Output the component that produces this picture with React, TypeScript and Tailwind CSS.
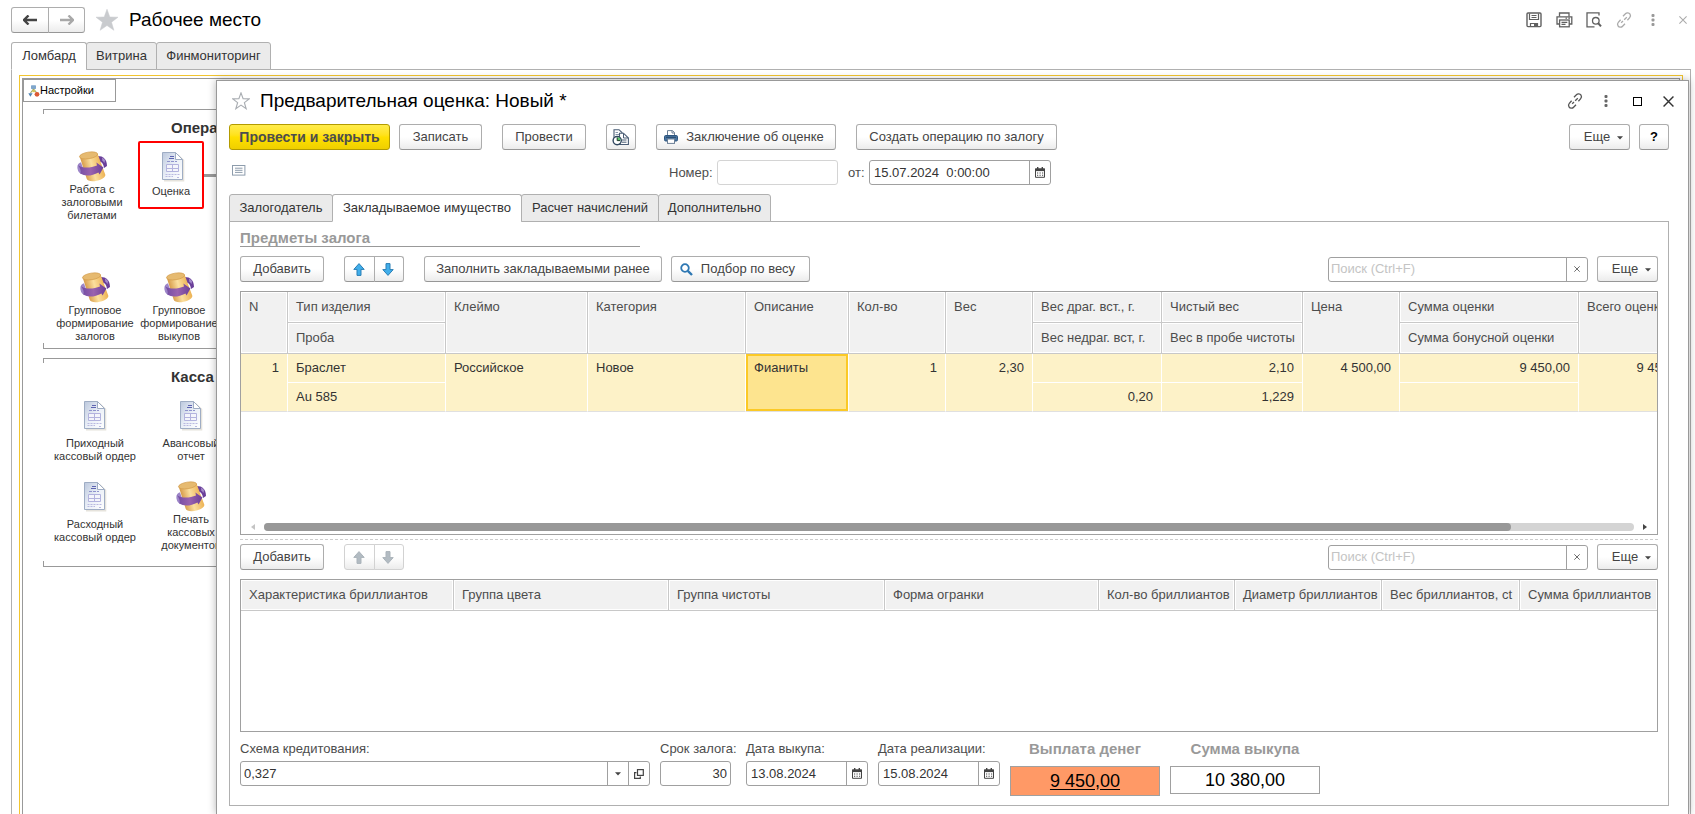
import type { ReactNode } from 'react'
import clsx from 'clsx'

const TOP_TABS = [
  { title: 'Ломбард', width: 'w-[76px]' },
  { title: 'Витрина', width: 'w-[71px]' },
  { title: 'Финмониторинг', width: 'w-[115px]' },
]

const FORM_TABS = [
  { title: 'Залогодатель', width: 'w-[104px]' },
  { title: 'Закладываемое имущество', width: 'w-[190px]' },
  { title: 'Расчет начислений', width: 'w-[138px]' },
  { title: 'Дополнительно', width: 'w-[113px]' },
]

interface Column {
  title: string
  sub?: string
  width: string
  value: string
  subValue?: string
  numeric?: boolean
  active?: boolean
}

const PLEDGE_COLUMNS: Column[] = [
  { title: 'N', width: 'w-[47px]', value: '1', numeric: true },
  { title: 'Тип изделия', sub: 'Проба', width: 'w-[158px]', value: 'Браслет', subValue: 'Au 585' },
  { title: 'Клеймо', width: 'w-[142px]', value: 'Российское' },
  { title: 'Категория', width: 'w-[158px]', value: 'Новое' },
  { title: 'Описание', width: 'w-[103px]', value: 'Фианиты', active: true },
  { title: 'Кол-во', width: 'w-[97px]', value: '1', numeric: true },
  { title: 'Вес', width: 'w-[87px]', value: '2,30', numeric: true },
  { title: 'Вес драг. вст., г.', sub: 'Вес недраг. вст, г.', width: 'w-[129px]', value: '', subValue: '0,20', numeric: true },
  { title: 'Чистый вес', sub: 'Вес в пробе чистоты', width: 'w-[141px]', value: '2,10', subValue: '1,229', numeric: true },
  { title: 'Цена', width: 'w-[97px]', value: '4 500,00', numeric: true },
  { title: 'Сумма оценки', sub: 'Сумма бонусной оценки', width: 'w-[179px]', value: '9 450,00', subValue: '', numeric: true },
  { title: 'Всего оценка', width: 'w-[117px]', value: '9 450,00', numeric: true },
]

const DIAMOND_COLUMNS = [
  { title: 'Характеристика бриллиантов', width: 'w-[213px]' },
  { title: 'Группа цвета', width: 'w-[215px]' },
  { title: 'Группа чистоты', width: 'w-[216px]' },
  { title: 'Форма огранки', width: '' },
  { title: 'Кол-во бриллиантов', width: 'w-[136px]' },
  { title: 'Диаметр бриллиантов', width: 'w-[147px]' },
  { title: 'Вес бриллиантов, ct', width: 'w-[138px]' },
  { title: 'Сумма бриллиантов', width: 'w-[137px]' },
]

/* ---------- icons ---------- */

function ArrowIcon({ back, color }: { back?: boolean; color: string }) {
  return (
    <svg width="14" height="10" viewBox="0 0 14 10" className={back ? '' : 'rotate-180'}>
      <path d="M5.5 0.5 L1 5 L5.5 9.5 M1.5 5 H14" fill="none" stroke={color} strokeWidth="2.4" />
    </svg>
  )
}

function Star({ size, filled }: { size: number; filled?: boolean }) {
  return (
    <svg width={size} height={size} viewBox="0 0 24 24">
      <path
        d="M12 1.2 L14.8 9 L23 9.2 L16.5 14.2 L18.9 22.3 L12 17.5 L5.1 22.3 L7.5 14.2 L1 9.2 L9.2 9 Z"
        fill={filled ? '#c9cbce' : '#fff'}
        stroke={filled ? '#c9cbce' : '#a9adb2'}
        strokeWidth={filled ? 0.5 : 1.5}
      />
    </svg>
  )
}

function LinkIcon({ color }: { color: string }) {
  return (
    <svg width="16" height="16" viewBox="0 0 16 16" fill="none" stroke={color} strokeWidth="1.3">
      <path d="M7 4.2 L9.4 1.8 a2.9 2.9 0 0 1 4.6 0.4 a2.9 2.9 0 0 1 -0.3 3.4 L11.4 8.2" />
      <path d="M9 11.8 L6.6 14.2 a2.9 2.9 0 0 1 -4.6 -0.4 a2.9 2.9 0 0 1 0.3 -3.4 L4.6 7.8" />
      <path d="M5.2 10.8 L7 9 M8.2 7.8 L10.8 5.2" />
    </svg>
  )
}

function DotsIcon({ color }: { color: string }) {
  return (
    <svg width="4" height="12" viewBox="0 0 4 12" fill={color}>
      <rect x="0.5" y="0" width="3" height="3" rx="1" />
      <rect x="0.5" y="4.5" width="3" height="3" rx="1" />
      <rect x="0.5" y="9" width="3" height="3" rx="1" />
    </svg>
  )
}

function CrossIcon({ size, color }: { size: number; color: string }) {
  return (
    <svg width={size} height={size} viewBox="0 0 10 10">
      <path d="M0.5 0.5 L9.5 9.5 M9.5 0.5 L0.5 9.5" stroke={color} strokeWidth="1.3" />
    </svg>
  )
}

function SaveIcon() {
  return (
    <svg width="16" height="16" viewBox="0 0 16 16" fill="none" stroke="#606060">
      <rect x="1" y="1" width="14" height="13.6" rx="1" strokeWidth="1.4" />
      <path d="M3.5 1.5 V7.5 H12.5 V1.5" strokeWidth="1.2" />
      <path d="M5.5 3.5 H10.5 M5.5 5.5 H10.5" />
      <path d="M4.5 14.5 V11.5 H11.5 V14.5" strokeWidth="1.2" />
      <rect x="8" y="12" width="3" height="2.5" fill="#606060" stroke="none" />
    </svg>
  )
}

function PrintIcon() {
  return (
    <svg width="17" height="16" viewBox="0 0 17 16" fill="none" stroke="#606060" strokeWidth="1.3">
      <path d="M3.5 4.5 V1 H13 V4.5" />
      <path d="M3.5 12 H1 V4.8 H15.8 V12 H13" />
      <rect x="3.6" y="8" width="9.6" height="6.8" />
      <path d="M5.5 10.3 H11.3 M5.5 12.4 H9.5 M9.5 6.2 H11 M12.3 6.2 H14" />
    </svg>
  )
}

function PreviewIcon() {
  return (
    <svg width="16" height="16" viewBox="0 0 16 16" fill="none" stroke="#606060" strokeWidth="1.3">
      <path d="M13 3.5 V0.8 H1 V14.8 H8.5" />
      <circle cx="9.8" cy="8.8" r="3.3" />
      <path d="M12 11 L15 14.3" strokeWidth="2" />
    </svg>
  )
}

function ReportIcon() {
  return (
    <svg width="18" height="17" viewBox="0 0 18 17">
      <path d="M2 0.7 H7 L10 3.5 V12 H2 Z" fill="#fff" stroke="#4a5d75" strokeWidth="1.1" />
      <path d="M3.5 3.5 H6 M3.5 5.5 H7" stroke="#8797aa" />
      <path d="M7.5 4.2 H11.5 L16.4 9 V15.5 H7.5 Z" fill="#fff" stroke="#4a5d75" strokeWidth="1.1" />
      <path d="M11.5 4.5 V9 H16.3 M10 11 H14.5 M10 13.2 H14.5" fill="none" stroke="#4a5d75" />
      <circle cx="5.2" cy="11.6" r="4.1" fill="#fff" stroke="#31475f" strokeWidth="1.4" />
      <path d="M5.2 8.2 A3.4 3.4 0 0 1 8.6 11.6 H5.2 Z" fill="#5ac46a" />
      <path d="M5.2 8.5 V11.6 H8" fill="none" stroke="#1d3a2a" />
    </svg>
  )
}

function BluePrinter() {
  return (
    <svg width="14" height="14" viewBox="0 0 14 14">
      <path d="M3.5 6 V0.6 H8.5 L10.5 2.6 V6" fill="#fff" stroke="#6b7f96" />
      <path d="M8 0.6 V3 H10.5" fill="none" stroke="#6b7f96" />
      <rect x="0.5" y="5.5" width="13" height="5.5" rx="1.2" fill="#47739f" stroke="#2d557f" />
      <path d="M2 7.3 H12" stroke="#23466b" />
      <rect x="3.5" y="9" width="7" height="4.4" fill="#fff" stroke="#6b7f96" />
    </svg>
  )
}

function SearchIcon() {
  return (
    <svg width="13" height="13" viewBox="0 0 13 13" fill="none" stroke="#2f78b3">
      <circle cx="5" cy="5" r="3.8" strokeWidth="1.8" />
      <path d="M7.8 7.8 L12 12" strokeWidth="2.4" />
    </svg>
  )
}

function CalendarIcon() {
  return (
    <svg width="10" height="11" viewBox="0 0 10 11">
      <path d="M0.5 2 H9.5 V10.3 H0.5 Z" fill="#fff" stroke="#444" />
      <rect x="0" y="1.5" width="10" height="2.6" fill="#444" />
      <rect x="2" y="0" width="1.4" height="2" fill="#444" />
      <rect x="6.6" y="0" width="1.4" height="2" fill="#444" />
      <path d="M2 6 H8.4 M2 8.2 H8.4" stroke="#444" strokeWidth="1.1" strokeDasharray="1.2 1.3" />
    </svg>
  )
}

function MoveIcon({ down, muted }: { down?: boolean; muted?: boolean }) {
  return (
    <svg width="12" height="13" viewBox="0 0 12 13" className={down ? 'rotate-180' : ''}>
      <path
        d="M6 0.6 L11.2 6.4 H8 V12.4 H4 V6.4 H0.8 Z"
        fill={muted ? '#b2bbc2' : '#41aeea'}
        stroke={muted ? '#aab3ba' : '#2b7fb5'}
      />
    </svg>
  )
}

function Caret() {
  return (
    <svg width="6" height="4" viewBox="0 0 6 4">
      <path d="M0 0.3 H6 L3 3.6 Z" fill="#444" />
    </svg>
  )
}

function OpenIcon() {
  return (
    <svg width="10" height="10" viewBox="0 0 10 10" fill="none" stroke="#444" strokeWidth="1.2">
      <rect x="3.5" y="0.6" width="5.8" height="5.8" />
      <path d="M2.5 3.6 H0.6 V9.3 H6.3 V7.6" />
    </svg>
  )
}

function ListIcon() {
  return (
    <svg width="14" height="11" viewBox="0 0 14 11">
      <rect x="0.5" y="0.5" width="12.4" height="9.6" fill="#fff" stroke="#8d9cac" />
      <path d="M3 3.2 H10.5 M3 5.3 H10.5 M3 7.4 H10.5" stroke="#8d9cac" />
    </svg>
  )
}

function SettingsIcon() {
  return (
    <svg width="12" height="12" viewBox="0 0 12 12">
      <rect x="3" y="0.3" width="5" height="3.6" rx="0.6" fill="#7fa6cc" />
      <path d="M5.5 4 L2.5 8 M5.5 4 L9 8 M5.5 4 V7" stroke="#9aa46b" strokeWidth="1.1" fill="none" />
      <path d="M0.3 8.2 H4.6 L2.4 11.7 Z" fill="#4f83b5" />
      <rect x="4.3" y="4.8" width="2.8" height="2.4" fill="#d2c35b" />
      <circle cx="9" cy="9.3" r="2.4" fill="#dc5a34" />
    </svg>
  )
}

// Gold roll wrapped with a purple arrow
function RollIcon() {
  return (
    <svg width="31" height="32" viewBox="0 0 31 32">
      <defs>
        <linearGradient id="gold" x1="0" x2="1" y1="0.3" y2="0">
          <stop offset="0" stopColor="#d08f3a" />
          <stop offset="0.4" stopColor="#fbdf9e" />
          <stop offset="0.75" stopColor="#eeb65a" />
          <stop offset="1" stopColor="#d8953a" />
        </linearGradient>
        <linearGradient id="violet" x1="0" x2="1">
          <stop offset="0" stopColor="#6f4ba3" />
          <stop offset="0.5" stopColor="#9a62ae" />
          <stop offset="1" stopColor="#6b3f98" />
        </linearGradient>
      </defs>
      <path d="M21 5 C26 5 30 8 30 15 L27 17 C26.5 13 25 10.5 21.5 10.5 Z" fill="#6a3f99" />
      <path d="M25 6.2 L28 9 L27.5 12 L25.3 9.2 Z" fill="#a58ccb" />
      <path d="M2.6 5.2 L9.6 27.5 C11 33 28 29.5 28.4 24 L20.6 2.8 Z" fill="url(#gold)" />
      <ellipse cx="11.6" cy="4.4" rx="9.2" ry="3.3" fill="#e6ba70" stroke="#cf9746" strokeWidth="0.6" transform="rotate(-9 11.6 4.4)" />
      <path
        d="M4 11.2 C1 12 -0.2 15 0.6 18 C1 20.5 2.2 21.8 4 23 L6 17 Z"
        fill="#9d86c8"
      />
      <path
        d="M0.8 14.2 C6 17.6 14 16.8 20 14.4 L19.4 11.6 L26.4 16.6 L22.6 23.6 L21.4 21.4 C15 25.2 7.5 25.4 3.4 22.6 C4.4 20 3 16.4 0.8 14.2 Z"
        fill="url(#violet)"
      />
    </svg>
  )
}

function DocIcon() {
  return (
    <svg width="24" height="31" viewBox="0 0 24 31">
      <defs>
        <linearGradient id="paper" x1="0" x2="1" y1="0" y2="1">
          <stop offset="0" stopColor="#bcc8dd" />
          <stop offset="0.5" stopColor="#eaeff7" />
          <stop offset="1" stopColor="#fff" />
        </linearGradient>
      </defs>
      <path d="M3 3 H17 L23.3 9 V30.5 H3 Z" fill="#e6e3dc" />
      <path d="M1.5 1.5 H14.5 L21.5 8.5 V28.5 H1.5 Z" fill="url(#paper)" stroke="#9fadc4" />
      <path d="M14.5 1.5 V8.5 H21.5 Z" fill="#fff" stroke="#9fadc4" />
      <path d="M9 5.5 H13 M8 7.5 H13" stroke="#5f65b2" />
      <path d="M6 10.5 H16" stroke="#8f93cd" strokeDasharray="3 1" />
      <path d="M5.5 13.5 H17.5 V20.5 H5.5 Z M11.5 13.5 V20.5 M5.5 17.5 H17.5" fill="#f4f5fb" stroke="#b3b3de" />
      <path d="M4.5 23.5 H18.5" stroke="#b9b9e0" strokeDasharray="2 1" />
      <path d="M4.5 25.5 H12 M16 26.5 H19" stroke="#b9b9e0" strokeDasharray="2 1" />
    </svg>
  )
}

/* ---------- controls ---------- */

interface ButtonProps {
  children: ReactNode
  className?: string
  primary?: boolean
  muted?: boolean
  label?: string
}

function Button({ children, className, primary, muted, label }: ButtonProps) {
  return (
    <button
      type="button"
      aria-label={label}
      className={clsx(
        'flex h-[26px] shrink-0 items-center justify-center rounded-[3px] border whitespace-nowrap',
        primary
          ? 'border-[#b39b00] bg-linear-to-b from-[#ffec4a] via-[#ffe000] to-[#efcf00] font-bold text-[#4d4d4d]'
          : 'bg-linear-to-b from-white from-50% to-[#ececec] text-[#444]',
        !primary && (muted ? 'border-[#d2d2d2]' : 'border-[#adadad] border-b-[#979797]'),
        className,
      )}
    >
      {children}
    </button>
  )
}

function MoreButton() {
  return (
    <Button className="w-[61px] gap-[7px] pl-2">
      Еще <span className="pt-0.5"><Caret /></span>
    </Button>
  )
}

function MoveButtons({ muted }: { muted?: boolean }) {
  return (
    <div className="flex">
      <Button className="w-[31px] rounded-r-none pr-0.5" muted={muted} label="Переместить вверх">
        <MoveIcon muted={muted} />
      </Button>
      <Button className="-ml-px w-[30px] rounded-l-none pr-0.5" muted={muted} label="Переместить вниз">
        <MoveIcon down muted={muted} />
      </Button>
    </div>
  )
}

function SearchBox({ label }: { label: string }) {
  return (
    <div className="flex h-[25px] w-[260px] rounded-[3px] border border-[#a0a0a0]">
      <input
        type="text"
        aria-label={label}
        placeholder="Поиск (Ctrl+F)"
        className="min-w-0 flex-1 px-0.5 text-[#333] outline-none placeholder:text-[#c4c4c4]"
      />
      <button type="button" aria-label="Очистить" className="flex w-[21px] items-center justify-center border-l border-[#a0a0a0]">
        <CrossIcon size={6} color="#444" />
      </button>
    </div>
  )
}

function DateBox({ id, value, className }: { id: string; value: string; className: string }) {
  return (
    <div className={clsx('flex h-[25px] rounded-[3px] border border-[#a0a0a0]', className)}>
      <input id={id} type="text" defaultValue={value} className="min-w-0 flex-1 px-1 whitespace-pre text-[#333] outline-none" />
      <button type="button" aria-label="Выбрать дату" className="flex w-[21px] items-center justify-center border-l border-[#a0a0a0]">
        <CalendarIcon />
      </button>
    </div>
  )
}

function Tabs({ items, active }: { items: { title: string; width: string }[]; active: number }) {
  return (
    <div role="tablist" className="relative z-10 -mb-px flex h-7">
      {items.map((tab, i) => (
        <button
          key={tab.title}
          type="button"
          role="tab"
          aria-selected={i === active}
          className={clsx(
            'rounded-t-[3px] border border-[#b0b0b0] whitespace-nowrap text-[#333]',
            i > 0 && '-ml-px',
            i === active ? 'border-b-white bg-white' : 'bg-[#ebebeb]',
            tab.width,
          )}
        >
          {tab.title}
        </button>
      ))}
    </div>
  )
}

/* ---------- desktop behind the form ---------- */

function Shortcut({ icon, lines, className }: { icon: ReactNode; lines: string[]; className?: string }) {
  return (
    <a href="#" className={clsx('flex flex-col items-center text-center', className)}>
      {icon}
      {lines.map(line => (
        <span key={line} className="whitespace-nowrap">{line}</span>
      ))}
    </a>
  )
}

function Group({ title, className, children }: { title: string; className?: string; children: ReactNode }) {
  return (
    <section className={clsx('ml-5 flex flex-col', className)}>
      <div className="h-[5px] border-t border-l border-[#999]" />
      <h2 className="mt-[5px] pl-32 text-[15px] leading-[18px] font-bold text-[#333]">{title}</h2>
      {children}
      <div className="mt-auto h-[6px] border-b border-l border-[#999]" />
    </section>
  )
}

function Desktop() {
  return (
    <div className="min-h-0 flex-1 overflow-hidden border border-b-0 border-[#b0b0b0] px-[7px] pt-[5px]">
      <div className="h-full border border-b-0 border-[#f2c52f] p-0.5 pb-0">
        <div className="h-full border border-b-0 border-[#999] text-[11px] leading-[13px] text-[#333]">
          <button type="button" className="flex h-[23px] w-[93px] items-center border border-[#999] pl-1 text-black">
            <SettingsIcon />
            Настройки
          </button>

          <Group title="Операции" className="mt-[7px] h-[240px]">
            <div className="mt-1 flex items-start">
              <Shortcut className="ml-2.5 w-[78px] pt-2.5" icon={<RollIcon />} lines={['Работа с', 'залоговыми', 'билетами']} />
              <div className="flex items-center">
                <Shortcut
                  className="ml-[7px] h-[68px] w-[66px] rounded-xs border-2 border-[#f00] pt-2"
                  icon={<span className="mb-[3px] pl-1"><DocIcon /></span>}
                  lines={['Оценка']}
                />
                <div className="h-[3px] w-20 bg-[#999]" />
              </div>
            </div>
            <div className="mt-[50px] flex items-start">
              <Shortcut className="ml-2.5 w-[84px]" icon={<RollIcon />} lines={['Групповое', 'формирование', 'залогов']} />
              <Shortcut className="w-[84px]" icon={<RollIcon />} lines={['Групповое', 'формирование', 'выкупов']} />
            </div>
          </Group>

          <Group title="Касса" className="mt-[9px] h-[209px]">
            <div className="mt-[14px] flex items-start">
              <Shortcut className="ml-1 w-24" icon={<span className="mb-1.5"><DocIcon /></span>} lines={['Приходный', 'кассовый ордер']} />
              <Shortcut className="w-24" icon={<span className="mb-1.5"><DocIcon /></span>} lines={['Авансовый', 'отчет']} />
            </div>
            <div className="mt-[18px] flex items-start">
              <Shortcut className="ml-1 w-24" icon={<span className="mb-1.5"><DocIcon /></span>} lines={['Расходный', 'кассовый ордер']} />
              <Shortcut className="w-24" icon={<RollIcon />} lines={['Печать', 'кассовых', 'документов']} />
            </div>
          </Group>
        </div>
      </div>
    </div>
  )
}

/* ---------- tables ---------- */

function PledgeTable() {
  const head = 'border-r border-b border-[#c8c8c8] bg-[#f1f1f1] px-2 text-left align-top font-normal whitespace-nowrap text-[#4d4d4d] shadow-[inset_0_0_0_1px_#fff]'
  const cell = 'border-r border-b border-r-white px-2 align-top whitespace-nowrap text-[#333]'

  return (
    <div className="flex min-h-0 flex-1 flex-col overflow-hidden border border-[#a0a0a0]">
      <div className="flex-1 overflow-hidden">
        <table className="w-[1455px] table-fixed border-separate border-spacing-0">
          <colgroup>
            {PLEDGE_COLUMNS.map(c => <col key={c.title} className={c.width} />)}
          </colgroup>
          <thead className="leading-[30px]">
            <tr className="h-[31px]">
              {PLEDGE_COLUMNS.map(c => (
                <th key={c.title} rowSpan={c.sub ? 1 : 2} className={head}>{c.title}</th>
              ))}
            </tr>
            <tr className="h-[31px]">
              {PLEDGE_COLUMNS.filter(c => c.sub).map(c => (
                <th key={c.title} className={head}>{c.sub}</th>
              ))}
            </tr>
          </thead>
          <tbody className="leading-[28px]">
            <tr className="h-[29px]">
              {PLEDGE_COLUMNS.map(c => (
                <td
                  key={c.title}
                  rowSpan={c.sub ? 1 : 2}
                  className={clsx(
                    cell,
                    c.numeric && 'text-right',
                    c.sub ? 'border-b-white' : 'border-b-[#e0e0e0]',
                    c.active ? 'bg-[#fde48f] shadow-[inset_0_0_0_2px_#fbc926]' : 'bg-[#fdf2c8]',
                  )}
                >
                  {c.value}
                </td>
              ))}
            </tr>
            <tr className="h-[29px]">
              {PLEDGE_COLUMNS.filter(c => c.sub).map(c => (
                <td key={c.title} className={clsx(cell, 'border-b-[#e0e0e0] bg-[#fdf2c8]', c.numeric && 'text-right')}>
                  {c.subValue}
                </td>
              ))}
            </tr>
          </tbody>
        </table>
      </div>
      {/* horizontal scroll bar */}
      <div className="mb-[3px] flex h-2 items-center px-2.5">
        <svg width="4" height="6" viewBox="0 0 4 6"><path d="M4 0 V6 L0 3 Z" fill="#c4c4c4" /></svg>
        <div className="mx-[9px] h-2 flex-1 rounded-full bg-[#d4d4d4]">
          <div className="h-2 w-[91%] rounded-full bg-[#989898]" />
        </div>
        <svg width="4" height="6" viewBox="0 0 4 6"><path d="M0 0 V6 L4 3 Z" fill="#444" /></svg>
      </div>
    </div>
  )
}

function DiamondTable() {
  return (
    <div className="mt-[9px] h-[153px] shrink-0 overflow-hidden border border-[#a0a0a0]">
      <table className="w-full table-fixed border-separate border-spacing-0 leading-[28px]">
        <thead>
          <tr className="h-[31px]">
            {DIAMOND_COLUMNS.map(c => (
              <th
                key={c.title}
                className={clsx(
                  'border-r border-b border-[#c8c8c8] bg-[#f1f1f1] pl-2 text-left font-normal whitespace-nowrap text-[#4d4d4d] shadow-[inset_0_0_0_1px_#fff] last:border-r-0',
                  c.width,
                )}
              >
                {c.title}
              </th>
            ))}
          </tr>
        </thead>
      </table>
    </div>
  )
}

/* ---------- form window ---------- */

function Totals() {
  return (
    <div className="mt-2 flex shrink-0 items-start text-[#4d4d4d]">
      <div className="w-[410px]">
        <label htmlFor="scheme" className="block leading-[18px]">Схема кредитования:</label>
        <div className="mt-[3px] flex h-[25px] rounded-[3px] border border-[#a0a0a0]">
          <input id="scheme" type="text" defaultValue="0,327" className="min-w-0 flex-1 px-[3px] text-[#333] outline-none" />
          <button type="button" aria-label="Выбрать" className="flex w-[21px] items-center justify-center border-l border-[#a0a0a0]">
            <Caret />
          </button>
          <button type="button" aria-label="Открыть" className="flex w-[21px] items-center justify-center border-l border-[#a0a0a0]">
            <OpenIcon />
          </button>
        </div>
      </div>
      <div className="ml-2.5 w-[76px]">
        <label htmlFor="term" className="block leading-[18px] whitespace-nowrap">Срок залога:</label>
        <input
          id="term"
          type="text"
          defaultValue="30"
          className="mt-[3px] block h-[25px] w-[71px] rounded-[3px] border border-[#a0a0a0] px-[3px] text-right text-[#333] outline-none"
        />
      </div>
      <div className="ml-2.5">
        <label htmlFor="buyout" className="block leading-[18px]">Дата выкупа:</label>
        <DateBox id="buyout" value="13.08.2024" className="mt-[3px] w-[122px]" />
      </div>
      <div className="ml-2.5">
        <label htmlFor="sale" className="block leading-[18px]">Дата реализации:</label>
        <DateBox id="sale" value="15.08.2024" className="mt-[3px] w-[122px]" />
      </div>
      <div className="ml-2.5 w-[150px] text-center">
        <div className="text-[15px] leading-[18px] font-bold text-[#999]">Выплата денег</div>
        <div className="mt-2 flex h-[30px] items-center justify-center border border-[#a0a0a0] bg-[#ff9966] text-[18px] text-black underline underline-offset-2">
          9 450,00
        </div>
      </div>
      <div className="ml-2.5 w-[150px] text-center">
        <div className="text-[15px] leading-[18px] font-bold text-[#999]">Сумма выкупа</div>
        <div className="mt-2 flex h-7 items-center justify-center border border-[#a0a0a0] text-[18px] text-black">
          10 380,00
        </div>
      </div>
    </div>
  )
}

function EstimateWindow() {
  return (
    <div className="absolute top-20 right-1.5 bottom-0 left-[216px] flex flex-col border border-b-0 border-[#999] bg-white pr-[19px] pb-2 pl-3 shadow-[0_0_8px_rgba(0,0,0,0.3)]">
      <div className="flex h-10 shrink-0 items-center pl-[3px]">
        <Star size={18} />
        <h2 className="ml-2.5 flex-1 text-[19px] text-black">Предварительная оценка: Новый *</h2>
        <div className="-mr-[5px] flex items-center">
          <button type="button" aria-label="Получить ссылку"><LinkIcon color="#555" /></button>
          <button type="button" aria-label="Меню" className="ml-[21px]"><DotsIcon color="#666" /></button>
          <button type="button" aria-label="Развернуть" className="ml-[25px] size-[9px] border border-black" />
          <button type="button" aria-label="Закрыть" className="ml-[21px]"><CrossIcon size={11} color="#333" /></button>
        </div>
      </div>

      <div className="mt-[3px] flex shrink-0 items-center">
        <Button primary className="w-[161px] text-[14px]">Провести и закрыть</Button>
        <Button className="ml-[9px] w-[83px]">Записать</Button>
        <Button className="ml-5 w-[84px]">Провести</Button>
        <Button className="ml-5 w-[30px]" label="Отчет о движениях"><ReportIcon /></Button>
        <Button className="ml-5 w-[180px] gap-2 pr-1"><BluePrinter />Заключение об оценке</Button>
        <Button className="ml-5 w-[201px]">Создать операцию по залогу</Button>
        <div className="ml-auto flex gap-[9px]">
          <MoreButton />
          <Button className="w-[30px]"><span className="font-bold text-black">?</span></Button>
        </div>
      </div>

      <div className="mt-2.5 flex h-[25px] shrink-0 items-center text-[#4d4d4d]">
        <button type="button" aria-label="Список" className="mr-[423px] mb-1 ml-[3px]"><ListIcon /></button>
        <label htmlFor="number" className="w-12">Номер:</label>
        <input id="number" type="text" className="h-[25px] w-[121px] rounded-[3px] border border-[#d4d4d4] px-1 outline-none" />
        <label htmlFor="date" className="ml-2.5 w-[21px]">от:</label>
        <DateBox id="date" value="15.07.2024  0:00:00" className="w-[182px]" />
      </div>

      <div className="mt-[9px] shrink-0">
        <Tabs items={FORM_TABS} active={1} />
      </div>
      <div className="flex min-h-0 flex-1 flex-col border border-[#b0b0b0] px-2.5 pb-[9px]">
        <h3 className="h-[25px] w-[400px] shrink-0 border-b border-[#999] text-[15px] leading-[32px] font-bold text-[#999]">
          Предметы залога
        </h3>
        <div className="mt-[9px] mb-[9px] flex shrink-0 items-center">
          <Button className="w-[84px]">Добавить</Button>
          <div className="ml-5"><MoveButtons /></div>
          <Button className="ml-5 w-[238px]">Заполнить закладываемыми ранее</Button>
          <Button className="ml-[9px] w-[139px] gap-2 pr-1.5"><SearchIcon />Подбор по весу</Button>
          <div className="ml-auto flex items-center gap-[9px]">
            <SearchBox label="Поиск предметов" />
            <MoreButton />
          </div>
        </div>
        <PledgeTable />
        <div className="mt-1 shrink-0 border-t border-dashed border-[#ccc]" />
        <div className="mt-1 flex shrink-0 items-center">
          <Button className="w-[84px]">Добавить</Button>
          <div className="ml-5"><MoveButtons muted /></div>
          <div className="ml-auto flex items-center gap-[9px]">
            <SearchBox label="Поиск бриллиантов" />
            <MoreButton />
          </div>
        </div>
        <DiamondTable />
        <Totals />
      </div>
    </div>
  )
}

export default function App() {
  return (
    <div className="relative flex h-screen flex-col overflow-hidden bg-white pr-1 pl-[11px] font-['Liberation_Sans',Arial,sans-serif] text-[13px]">
      <header className="flex h-[42px] shrink-0 items-center pb-0.5">
        <div className="flex">
          <Button className="w-[38px] rounded-r-none" label="Назад"><ArrowIcon back color="#444" /></Button>
          <Button className="-ml-px w-[37px] rounded-l-none" label="Вперед"><ArrowIcon color="#a8a8a8" /></Button>
        </div>
        <button type="button" aria-label="В избранное" className="ml-2.5"><Star size={24} filled /></button>
        <h1 className="ml-2.5 flex-1 text-[19px] text-black">Рабочее место</h1>
        <div className="flex items-center pr-1">
          <button type="button" aria-label="Сохранить"><SaveIcon /></button>
          <button type="button" aria-label="Печать" className="ml-3.5"><PrintIcon /></button>
          <button type="button" aria-label="Просмотр" className="ml-[13px]"><PreviewIcon /></button>
          <button type="button" aria-label="Ссылка" className="ml-3.5"><LinkIcon color="#aaa" /></button>
          <button type="button" aria-label="Меню" className="ml-[19px]"><DotsIcon color="#999" /></button>
          <button type="button" aria-label="Закрыть" className="ml-6"><CrossIcon size={8} color="#aaa" /></button>
        </div>
      </header>
      <Tabs items={TOP_TABS} active={0} />
      <Desktop />
      <EstimateWindow />
    </div>
  )
}
